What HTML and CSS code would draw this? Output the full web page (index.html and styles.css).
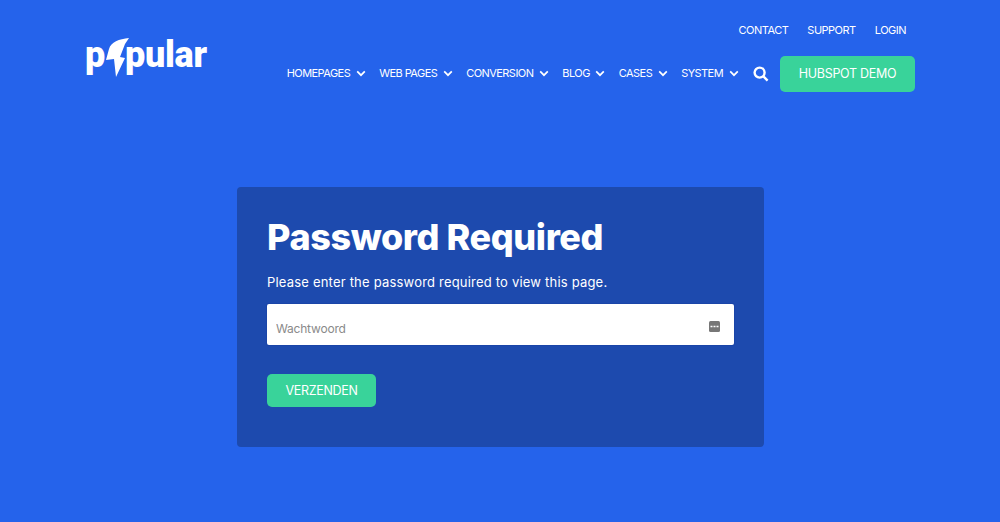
FILE: index.html
```html
<!DOCTYPE html>
<html lang="nl">
<head>
    <meta charset="UTF-8">
    <meta name="viewport" content="width=device-width, initial-scale=1.0">
    <title>Password Required</title>
    <link rel="stylesheet" href="styles.css">
</head>
<body>
    <header class="site-header">
        <a class="logo" href="#">
            <span>p</span>
            <svg class="logo-bolt" viewBox="0 0 26 42" width="26" height="42" aria-hidden="true">
                <path d="M25 1 C15 2 7 5 5 12 L2 23 L10 22 L12 40 L21 21 L16 20 L21 7 Z" fill="#fff"/>
            </svg>
            <span>pular</span>
        </a>
        <div class="header-right">
            <nav class="top-nav">
                <a href="#">CONTACT</a>
                <a href="#">SUPPORT</a>
                <a href="#">LOGIN</a>
            </nav>
            <nav class="main-nav">
                <a class="nav-item" href="#">HOMEPAGES <svg class="chev" viewBox="0 0 10 7"><path d="M1.2 1.4 5 5.200 8.800 1.4"/></svg></a>
                <a class="nav-item" href="#">WEB PAGES <svg class="chev" viewBox="0 0 10 7"><path d="M1.2 1.4 5 5.200 8.800 1.4"/></svg></a>
                <a class="nav-item" href="#">CONVERSION <svg class="chev" viewBox="0 0 10 7"><path d="M1.2 1.4 5 5.200 8.800 1.4"/></svg></a>
                <a class="nav-item" href="#">BLOG <svg class="chev" viewBox="0 0 10 7"><path d="M1.2 1.4 5 5.200 8.800 1.4"/></svg></a>
                <a class="nav-item" href="#">CASES <svg class="chev" viewBox="0 0 10 7"><path d="M1.2 1.4 5 5.200 8.800 1.4"/></svg></a>
                <a class="nav-item" href="#">SYSTEM <svg class="chev" viewBox="0 0 10 7"><path d="M1.2 1.4 5 5.200 8.800 1.4"/></svg></a>
                <svg class="search" viewBox="0 0 16 16" width="16" height="16" aria-hidden="true">
                    <circle cx="6.600" cy="6.600" r="5"/>
                    <path d="M10.4 10.4 14.6 14.6"/>
                </svg>
                <a class="btn demo" href="#">HUBSPOT DEMO</a>
            </nav>
        </div>
    </header>

    <main class="panel">
        <h1>Password Required</h1>
        <p>Please enter the password required to view this page.</p>
        <div class="password-field">
            <input type="text" placeholder="Wachtwoord">
            <svg class="key-icon" viewBox="0 0 11 11" width="11" height="11" aria-hidden="true">
                <rect width="11" height="11" rx="1.5" fill="#777"/>
                <path d="M1.500 5.500h2M4.500 5.500h2M7.500 5.500h2" stroke="#fff" stroke-width="1.3"/>
            </svg>
        </div>
        <button class="btn submit">VERZENDEN</button>
    </main>
</body>
</html>
```

FILE: styles.css
```css
body {
    margin: 0;
    height: 522px;
    overflow: hidden;
    background-color: #2563eb;
    color: #fff;
    font-family: Inter, Arial, sans-serif;
}
a {
    color: #fff;
    text-decoration: none;
}
.site-header {
    display: flex;
    justify-content: space-between;
    width: 830px;
    margin: 0 auto;
    padding-top: 21px;
}
.logo {
    display: flex;
    align-items: flex-start;
    height: 60px;
    margin-top: 16px;
    font-family: Roboto, sans-serif;
    font-size: 36px;
    font-weight: 900;
    line-height: 37px;
    letter-spacing: -0.3px;
}
.logo-bolt {
    margin: 0 -5px 0 -1px;
}
.header-right {
    display: flex;
    flex-direction: column;
    align-items: flex-end;
}
.top-nav {
    display: flex;
    gap: 19px;
    padding-right: 9px;
    margin-bottom: 17px;
    font-size: 11px;
    letter-spacing: -0.5px;
    line-height: 18px;
}
.main-nav {
    display: flex;
    align-items: center;
    gap: 13.4px;
    font-size: 11px;
    letter-spacing: -0.55px;
}
.nav-item {
    white-space: nowrap;
    margin-top: -2px;
}
.chev {
    width: 10px;
    height: 7px;
    margin-left: 3px;
    fill: none;
    stroke: #fff;
    stroke-width: 1.7;
}
.search {
    margin-left: 1px;
    fill: none;
    stroke: #fff;
    stroke-width: 2.4;
}
.btn {
    border: 0;
    border-radius: 5px;
    background-color: #39d39a;
    color: #fff;
    font-family: Inter, Arial, sans-serif;
}
.main-nav .demo {
    width: 135px;
    height: 36px;
    margin-left: -2.4px;
    font-size: 12.5px;
    letter-spacing: -0.3px;
    line-height: 36px;
    text-align: center;
}
.panel {
    box-sizing: border-box;
    width: 527px;
    height: 260px;
    margin: 90px 0 0 237px;
    padding: 29px 30px;
    border-radius: 4px;
    background-color: #1d4aae;
}
h1 {
    margin: 0;
    font-size: 36px;
    font-weight: 800;
    line-height: 42px;
    letter-spacing: -0.4px;
}
p {
    margin: 14px 0 12px;
    font-size: 13px;
    line-height: 20px;
    letter-spacing: 0.2px;
}
.password-field {
    display: flex;
    align-items: center;
    box-sizing: border-box;
    height: 41px;
    padding: 4px 14px 0 9px;
    border-radius: 2px;
    background-color: #fff;
    box-shadow: 0 0 0 1px #1a45a8;
}
.password-field input {
    flex: 1;
    min-width: 0;
    padding: 4px 0 0;
    border: 0;
    outline: 0;
    font-family: Inter, Arial, sans-serif;
    font-size: 12px;
    letter-spacing: -0.2px;
}
.password-field input::placeholder {
    color: #8a8a8a;
}
.submit {
    display: block;
    width: 109px;
    height: 33px;
    margin-top: 29px;
    padding: 0;
    font-size: 12.5px;
    letter-spacing: -0.3px;
}
```
